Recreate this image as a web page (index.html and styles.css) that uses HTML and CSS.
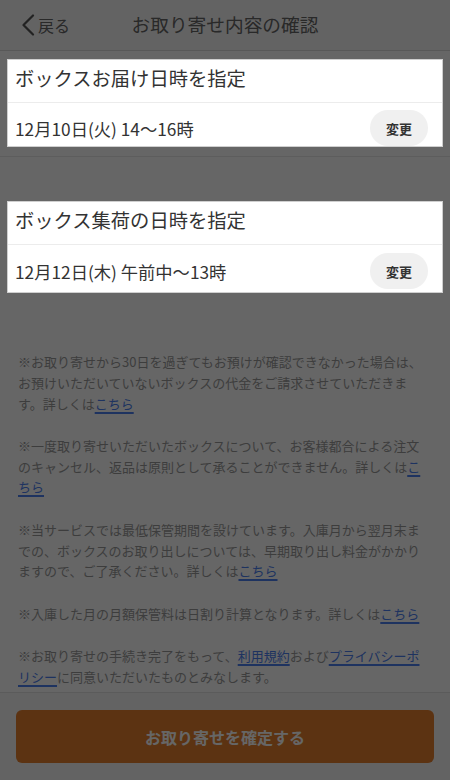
FILE: index.html
```html
<!DOCTYPE html>
<html lang="ja">
<head>
<meta charset="utf-8">
<title>お取り寄せ内容の確認</title>
<link rel="stylesheet" href="styles.css">
</head>
<body>
<header class="nav">
  <a class="nav-back" href="#">
    <svg class="chevron" width="14" height="22" viewBox="0 0 14 22"><polyline points="12,1.5 2.5,11 12,20.5" fill="none" stroke="currentColor" stroke-width="2.2" stroke-linecap="round" stroke-linejoin="round"/></svg>
    <span>戻る</span>
  </a>
  <h1 class="nav-title">お取り寄せ内容の確認</h1>
  <span class="nav-spacer"></span>
</header>

<main class="main">
  <section class="group group-first">
    <div class="card">
      <div class="card-title">ボックスお届け日時を指定</div>
      <div class="card-row">
        <span class="card-date">12月10日(火) 14〜16時</span>
        <button class="change-btn">変更</button>
      </div>
    </div>
  </section>

  <section class="group group-second">
    <div class="card card-tall">
      <div class="card-title">ボックス集荷の日時を指定</div>
      <div class="card-row">
        <span class="card-date">12月12日(木) 午前中〜13時</span>
        <button class="change-btn">変更</button>
      </div>
    </div>
  </section>

  <div class="notes">
    <p>※お取り寄せから30日を過ぎてもお預けが確認できなかった場合は、お預けいただいていないボックスの代金をご請求させていただきます。詳しくは<a href="#">こちら</a></p>
    <p>※一度取り寄せいただいたボックスについて、お客様都合による注文のキャンセル、返品は原則として承ることができません。詳しくは<a href="#">こちら</a></p>
    <p>※当サービスでは最低保管期間を設けています。入庫月から翌月末までの、ボックスのお取り出しについては、早期取り出し料金がかかりますので、ご了承ください。詳しくは<a href="#">こちら</a></p>
    <p>※入庫した月の月額保管料は日割り計算となります。詳しくは<a href="#">こちら</a></p>
    <p>※お取り寄せの手続き完了をもって、<a href="#">利用規約</a>および<a href="#">プライバシーポリシー</a>に同意いただいたものとみなします。</p>
  </div>
</main>

<footer class="footer">
  <button class="confirm-btn">お取り寄せを確定する</button>
</footer>

<div class="overlay"></div>
</body>
</html>
```

FILE: styles.css
```css
* { box-sizing: border-box; }

html, body {
  margin: 0;
  padding: 0;
}

body {
  height: 780px;
  overflow: hidden;
  display: flex;
  flex-direction: column;
  background: #ffffff;
  font-family: "Noto Sans CJK JP", "Noto Sans", sans-serif;
  color: #333;
}

/* header */
.nav {
  flex: 0 0 auto;
  height: 51px;
  display: grid;
  grid-template-columns: 1fr auto 1fr;
  align-items: center;
  background: #f8f8f8;
  border-bottom: 1px solid #dcdcdc;
  padding: 0 0 1px 0;
}

.nav-back {
  display: flex;
  align-items: center;
  gap: 3px;
  padding-left: 21px;
  color: #666;
  text-decoration: none;
  font-size: 16px;
  line-height: 1;
}

.chevron {
  color: #555;
  display: block;
}

.nav-back span {
  padding-top: 1px;
}

.nav-title {
  margin: 0;
  font-size: 18.7px;
  font-weight: 400;
  color: #666;
  line-height: 1;
}

/* groups & cards */
.main {
  flex: 1 1 auto;
  min-height: 0;
  display: flex;
  flex-direction: column;
}

.group-first {
  padding: 8px 7px 9px;
  border-bottom: 1px solid #e8e8e8;
}

.group-second {
  padding: 0 7px;
  margin-top: 44px;
}

.card {
  position: relative;
  z-index: 20;
  background: #fff;
  border: 1px solid #cfcfcf;
}

.card-title {
  height: 43px;
  display: flex;
  align-items: center;
  padding: 0 7px 6px;
  font-size: 19.3px;
  color: #333;
  border-bottom: 1px solid #ececec;
}

.card-row {
  display: flex;
  align-items: center;
  justify-content: space-between;
  padding: 7px 14px 0 7px;
}

.card-tall .card-row {
  padding-top: 8px;
  padding-bottom: 3px;
}

.card-date {
  font-size: 17.3px;
  color: #333;
}

.change-btn {
  width: 58px;
  height: 36px;
  border: none;
  border-radius: 18px;
  background: #f0f0f0;
  color: #333;
  font-family: inherit;
  font-size: 13px;
  font-weight: 700;
  padding: 0;
}

/* notes */
.notes {
  margin-top: 59px;
  padding: 0 28px 0 18px;
  font-size: 13px;
  line-height: 20.8px;
  color: #9a9a9a;
}

.notes p {
  margin: 0 0 21.5px;
}

.notes p:last-child {
  margin-bottom: 0;
}

.notes a {
  color: #4d7ff0;
  text-decoration: underline;
  text-decoration-thickness: 1.5px;
  text-underline-offset: 3px;
}

/* footer */
.footer {
  flex: 0 0 auto;
  border-top: 1px solid #e4e4e4;
  background: #f7f7f7;
  padding: 17px 16px 17px;
}

.confirm-btn {
  display: block;
  width: 100%;
  height: 53px;
  border: none;
  border-radius: 6px;
  background: #e67f2d;
  color: #ffffff;
  font-family: inherit;
  font-size: 16px;
  font-weight: 700;
}

/* dim overlay */
.overlay {
  position: fixed;
  inset: 0;
  z-index: 10;
  background: rgba(0, 0, 0, 0.6);
}
```
